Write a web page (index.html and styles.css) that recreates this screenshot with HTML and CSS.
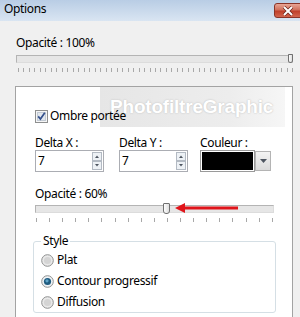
FILE: index.html
```html
<!DOCTYPE html>
<html lang="fr">
<head>
    <meta charset="UTF-8">
    <title>Options</title>
    <link rel="stylesheet" href="styles.css">
</head>
<body>
    <div class="titlebar">
        <span class="title">Options</span>
        <span class="close">
            <svg width="12" height="10" viewBox="0 0 12 10"><path d="M2 1 L10 9 M10 1 L2 9" stroke="#6b2218" stroke-width="3.4"/><path d="M2 1 L10 9 M10 1 L2 9" stroke="#fff" stroke-width="2"/></svg>
        </span>
    </div>

    <div class="content">
        <div class="label">Opacité : 100%</div>
        <div class="slider slider-main">
            <div class="track"><span class="thumb"></span></div>
            <div class="ticks"></div>
        </div>

        <div class="panel">
            <div class="watermark">PhotofiltreGraphic</div>

            <div class="check">
                <svg width="13" height="13" viewBox="0 0 13 13">
                    <rect x="0.5" y="0.5" width="12" height="12" fill="#f6f6f6" stroke="#8e8f8f"/>
                    <rect x="2.5" y="2.5" width="8" height="8" fill="#e2e7ee" stroke="#c2cad4"/>
                    <path d="M3.2 6.4 L5.4 9 L9.8 2.8" fill="none" stroke="#34508c" stroke-width="1.7"/>
                </svg>
                <span>Ombre portée</span>
            </div>

            <div class="fields">
                <div class="field">
                    <div class="field-label">Delta X :</div>
                    <div class="spin">
                        <span class="val">7</span>
                        <span class="arrows">
                            <svg width="10" height="18" viewBox="0 0 10 18">
                                <rect x="0.5" y="0.5" width="9" height="8" fill="#edf1f5" stroke="#b3bac3"/>
                                <rect x="0.5" y="9.5" width="9" height="8" fill="#edf1f5" stroke="#b3bac3"/>
                                <path d="M3 6 L5 3.5 L7 6 Z" fill="#4d5560"/>
                                <path d="M3 12 L5 14.5 L7 12 Z" fill="#4d5560"/>
                            </svg>
                        </span>
                    </div>
                </div>
                <div class="field">
                    <div class="field-label">Delta Y :</div>
                    <div class="spin">
                        <span class="val">7</span>
                        <span class="arrows">
                            <svg width="10" height="18" viewBox="0 0 10 18">
                                <rect x="0.5" y="0.5" width="9" height="8" fill="#edf1f5" stroke="#b3bac3"/>
                                <rect x="0.5" y="9.5" width="9" height="8" fill="#edf1f5" stroke="#b3bac3"/>
                                <path d="M3 6 L5 3.5 L7 6 Z" fill="#4d5560"/>
                                <path d="M3 12 L5 14.5 L7 12 Z" fill="#4d5560"/>
                            </svg>
                        </span>
                    </div>
                </div>
                <div class="field">
                    <div class="field-label">Couleur :</div>
                    <div class="color">
                        <span class="swatch"><span class="swatch-fill"></span></span>
                        <span class="drop">
                            <svg width="7" height="4" viewBox="0 0 7 4"><path d="M0 0 H7 L3.5 4 Z" fill="#4d5560"/></svg>
                        </span>
                    </div>
                </div>
            </div>

            <div class="label label-inner">Opacité : 60%</div>
            <div class="slider slider-shadow">
                <div class="track">
                    <span class="thumb"></span>
                    <svg class="arrow" width="64" height="10" viewBox="0 0 64 10">
                        <path d="M0 5 L10 0 L10 3.4 L63 3.4 L63 6.6 L10 6.6 L10 10 Z" fill="#e0141a"/>
                    </svg>
                </div>
                <div class="ticks"></div>
            </div>

            <fieldset class="group">
                <legend>Style</legend>
                <div class="radio">
                    <svg width="13" height="13" viewBox="0 0 13 13"><circle cx="6.5" cy="6.5" r="5.8" fill="#e9e9e9" stroke="#8e8f8f"/><circle cx="6.5" cy="6.5" r="3.6" fill="#d4d4d4"/></svg>
                    <span>Plat</span>
                </div>
                <div class="radio">
                    <svg width="13" height="13" viewBox="0 0 13 13"><circle cx="6.5" cy="6.5" r="5.8" fill="#eef2f5" stroke="#8e8f8f"/><circle cx="6.5" cy="6.5" r="3.6" fill="#1f5c80"/><circle cx="6" cy="5.8" r="1.6" fill="#5fa4c8"/></svg>
                    <span>Contour progressif</span>
                </div>
                <div class="radio">
                    <svg width="13" height="13" viewBox="0 0 13 13"><circle cx="6.5" cy="6.5" r="5.8" fill="#e9e9e9" stroke="#8e8f8f"/><circle cx="6.5" cy="6.5" r="3.6" fill="#d4d4d4"/></svg>
                    <span>Diffusion</span>
                </div>
            </fieldset>
        </div>
    </div>
</body>
</html>
```

FILE: styles.css
```css
body {
    margin: 0;
    height: 317px;
    overflow: hidden;
    background-color: #f0f0f0;
    font-family: "Noto Sans", sans-serif;
    font-size: 12px;
    line-height: 16px;
    letter-spacing: -0.35px;
    color: #000;
}
.titlebar {
    height: 21px;
    display: flex;
    justify-content: space-between;
    align-items: flex-start;
    overflow: hidden;
    background: linear-gradient(#b9cde5, #d9e5f2);
}
.title {
    padding: 1px 0 0 4px;
}
.close {
    margin-top: 3px;
    margin-right: -8px;
    width: 25px;
    height: 13px;
    display: flex;
    align-items: center;
    justify-content: flex-start;
    padding-left: 7px;
    border: 1px solid #8a3428;
    border-radius: 3px 0 0 3px;
    background: linear-gradient(#e8a595, #d0705c 45%, #c0402a 55%, #d2664e);
}
.content {
    padding: 0 7px 0 15px;
}
.label {
    margin-top: 14px;
    padding-left: 1px;
}
.slider {
    margin-left: 1px;
}
.track {
    position: relative;
    height: 6px;
    margin-top: 4px;
    border: 1px solid;
    border-color: #b4b4b4 #dcdcdc #dcdcdc #b4b4b4;
    background: #e6e6e6;
}
.thumb {
    position: absolute;
    top: -2px;
    right: -1px;
    width: 3px;
    height: 7px;
    border: 1px solid #707070;
    border-radius: 1px 1px 3px 3px;
    background: linear-gradient(to right, #fdfdfd, #dedede);
}
.ticks {
    height: 4px;
    margin-top: 5px;
    margin-left: 2px;
    background: repeating-linear-gradient(to right, #a8a8a8 0 1px, transparent 1px 5.48px);
}
.panel {
    position: relative;
    height: 300px;
    margin-top: 14px;
    padding-left: 19px;
    border: 1px solid #a3a3a3;
    background: #fff;
}
.watermark {
    position: absolute;
    top: 0;
    left: 84px;
    width: 175px;
    height: 40px;
    padding-left: 10px;
    line-height: 40px;
    font-family: "Liberation Sans", Arial, sans-serif;
    font-size: 19px;
    font-weight: bold;
    letter-spacing: -0.2px;
    color: #fff;
    text-shadow: 0 0 2px #c4c4c4, 0 0 1px #d2d2d2;
    background: linear-gradient(to right, #e6e6e6, #ededed 70%, #f6f6f6);
}
.check {
    position: relative;
    display: flex;
    align-items: center;
    gap: 2px;
    margin-top: 21px;
}
.fields {
    display: grid;
    grid-template-columns: 84px 81px auto;
    margin-top: 12px;
}
.field-label {
    line-height: 14px;
}
.spin {
    display: flex;
    width: 69px;
    height: 22px;
    box-sizing: border-box;
    border: 1px solid #abadb3;
    background: #fff;
}
.spin .val {
    flex: 1;
    padding-left: 2px;
    line-height: 20px;
}
.spin .arrows {
    padding: 1px 1px 0 0;
}
.color {
    display: flex;
    height: 22px;
}
.swatch {
    width: 55px;
    height: 22px;
    padding: 1px;
    box-sizing: border-box;
    border: 1px solid #9a9a9a;
    background: #fff;
}
.swatch-fill {
    display: block;
    height: 100%;
    background: #000;
}
.drop {
    width: 16px;
    height: 20px;
    margin-top: 1px;
    box-sizing: border-box;
    border: 1px solid #b4b4b4;
    display: flex;
    align-items: center;
    justify-content: center;
    background: linear-gradient(#f4f4f4, #dadada);
}
.label-inner {
    padding-left: 0;
}
.slider-shadow {
    width: 239px;
    margin-left: 0;
}
.slider-shadow .track {
    margin-top: 3px;
}
.slider-shadow .thumb {
    left: 127px;
    right: auto;
    top: -3px;
    width: 5px;
    height: 9px;
}
.slider-shadow .ticks {
    margin-left: 1px;
    background: repeating-linear-gradient(to right, #a8a8a8 0 1px, transparent 1px 13.1px);
}
.arrow {
    position: absolute;
    top: -3px;
    left: 139px;
}
.group {
    width: 243px;
    box-sizing: border-box;
    margin: 11px 0 0 -2px;
    padding: 3px 7px 2px;
    border: 1px solid #d5dfe5;
    border-radius: 3px;
}
.group legend {
    padding: 0 2px;
}
.radio {
    display: flex;
    align-items: center;
    gap: 3px;
    height: 16px;
    margin-top: 5px;
}
.radio:first-of-type {
    margin-top: 0;
}
```
